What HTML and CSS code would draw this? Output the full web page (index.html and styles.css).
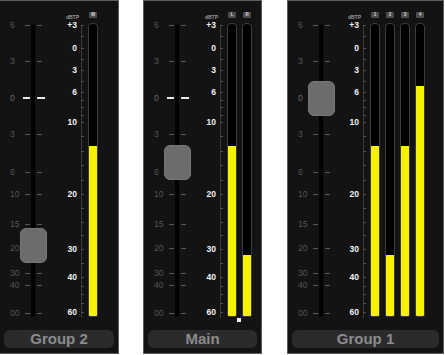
FILE: index.html
```html
<!DOCTYPE html>
<html>
<head>
<meta charset="utf-8">
<link rel="stylesheet" href="styles.css">
</head>
<body>
<div class="strips">

  <section class="strip strip--g2">
    <div class="strip__body">
      <div class="fader">
        <div class="fader__track"></div>
        <div class="mark" style="top:19px"><span class="mark__label">6</span><i class="tick"></i><i class="tick"></i></div>
        <div class="mark" style="top:55px"><span class="mark__label">3</span><i class="tick"></i><i class="tick"></i></div>
        <div class="mark mark--zero" style="top:92px"><span class="mark__label">0</span><i class="tick"></i><i class="tick"></i></div>
        <div class="mark" style="top:128px"><span class="mark__label">3</span><i class="tick"></i><i class="tick"></i></div>
        <div class="mark" style="top:166px"><span class="mark__label">6</span><i class="tick"></i><i class="tick"></i></div>
        <div class="mark" style="top:188px"><span class="mark__label">10</span><i class="tick"></i><i class="tick"></i></div>
        <div class="mark" style="top:218px"><span class="mark__label">15</span><i class="tick"></i><i class="tick"></i></div>
        <div class="mark" style="top:242px"><span class="mark__label">20</span><i class="tick"></i><i class="tick"></i></div>
        <div class="mark" style="top:267px"><span class="mark__label">30</span><i class="tick"></i><i class="tick"></i></div>
        <div class="mark" style="top:279px"><span class="mark__label">40</span><i class="tick"></i><i class="tick"></i></div>
        <div class="mark" style="top:307px"><span class="mark__label">00</span><i class="tick"></i><i class="tick"></i></div>
        <div class="fader__knob" style="top:227px"></div>
      </div>
      <div class="meters" style="--n:1">
        <span class="dbtp">dBTP</span>
        <span class="badge">M</span>
        <div class="scale">
          <i class="scale__line"></i>
          <i class="scale__tick" style="top:2px"></i><i class="scale__tick" style="top:13px"></i><i class="scale__tick" style="top:25px"></i><i class="scale__tick" style="top:36px"></i><i class="scale__tick" style="top:47px"></i><i class="scale__tick" style="top:58px"></i><i class="scale__tick" style="top:69px"></i><i class="scale__tick" style="top:77px"></i><i class="scale__tick" style="top:84px"></i><i class="scale__tick" style="top:92px"></i><i class="scale__tick" style="top:99px"></i><i class="scale__tick" style="top:113px"></i><i class="scale__tick" style="top:128px"></i><i class="scale__tick" style="top:142px"></i><i class="scale__tick" style="top:157px"></i><i class="scale__tick" style="top:171px"></i><i class="scale__tick" style="top:185px"></i><i class="scale__tick" style="top:199px"></i><i class="scale__tick" style="top:212px"></i><i class="scale__tick" style="top:226px"></i><i class="scale__tick" style="top:240px"></i><i class="scale__tick" style="top:254px"></i><i class="scale__tick" style="top:263px"></i><i class="scale__tick" style="top:271px"></i><i class="scale__tick" style="top:280px"></i><i class="scale__tick" style="top:289px"></i>
          <span class="scale__label" style="top:-3px">+3</span>
          <span class="scale__label" style="top:20px">0</span>
          <span class="scale__label" style="top:42px">3</span>
          <span class="scale__label" style="top:64px">6</span>
          <span class="scale__label" style="top:94px">10</span>
          <span class="scale__label" style="top:166px">20</span>
          <span class="scale__label" style="top:221px">30</span>
          <span class="scale__label" style="top:249px">40</span>
          <span class="scale__label" style="top:284px">60</span>
        </div>
        <div class="meter"><div class="meter__fill" style="height:170px"></div></div>
      </div>
    </div>
    <div class="name">Group 2</div>
  </section>

  <section class="strip strip--main">
    <div class="strip__body">
      <div class="fader">
        <div class="fader__track"></div>
        <div class="mark" style="top:19px"><span class="mark__label">6</span><i class="tick"></i><i class="tick"></i></div>
        <div class="mark" style="top:55px"><span class="mark__label">3</span><i class="tick"></i><i class="tick"></i></div>
        <div class="mark mark--zero" style="top:92px"><span class="mark__label">0</span><i class="tick"></i><i class="tick"></i></div>
        <div class="mark" style="top:128px"><span class="mark__label">3</span><i class="tick"></i><i class="tick"></i></div>
        <div class="mark" style="top:166px"><span class="mark__label">6</span><i class="tick"></i><i class="tick"></i></div>
        <div class="mark" style="top:188px"><span class="mark__label">10</span><i class="tick"></i><i class="tick"></i></div>
        <div class="mark" style="top:218px"><span class="mark__label">15</span><i class="tick"></i><i class="tick"></i></div>
        <div class="mark" style="top:242px"><span class="mark__label">20</span><i class="tick"></i><i class="tick"></i></div>
        <div class="mark" style="top:267px"><span class="mark__label">30</span><i class="tick"></i><i class="tick"></i></div>
        <div class="mark" style="top:279px"><span class="mark__label">40</span><i class="tick"></i><i class="tick"></i></div>
        <div class="mark" style="top:307px"><span class="mark__label">00</span><i class="tick"></i><i class="tick"></i></div>
        <div class="fader__knob" style="top:144px"></div>
      </div>
      <div class="meters" style="--n:2">
        <span class="dbtp">dBTP</span>
        <span class="badge">L</span>
        <span class="badge">R</span>
        <div class="scale">
          <i class="scale__line"></i>
          <i class="scale__tick" style="top:2px"></i><i class="scale__tick" style="top:13px"></i><i class="scale__tick" style="top:25px"></i><i class="scale__tick" style="top:36px"></i><i class="scale__tick" style="top:47px"></i><i class="scale__tick" style="top:58px"></i><i class="scale__tick" style="top:69px"></i><i class="scale__tick" style="top:77px"></i><i class="scale__tick" style="top:84px"></i><i class="scale__tick" style="top:92px"></i><i class="scale__tick" style="top:99px"></i><i class="scale__tick" style="top:113px"></i><i class="scale__tick" style="top:128px"></i><i class="scale__tick" style="top:142px"></i><i class="scale__tick" style="top:157px"></i><i class="scale__tick" style="top:171px"></i><i class="scale__tick" style="top:185px"></i><i class="scale__tick" style="top:199px"></i><i class="scale__tick" style="top:212px"></i><i class="scale__tick" style="top:226px"></i><i class="scale__tick" style="top:240px"></i><i class="scale__tick" style="top:254px"></i><i class="scale__tick" style="top:263px"></i><i class="scale__tick" style="top:271px"></i><i class="scale__tick" style="top:280px"></i><i class="scale__tick" style="top:289px"></i>
          <span class="scale__label" style="top:-3px">+3</span>
          <span class="scale__label" style="top:20px">0</span>
          <span class="scale__label" style="top:42px">3</span>
          <span class="scale__label" style="top:64px">6</span>
          <span class="scale__label" style="top:94px">10</span>
          <span class="scale__label" style="top:166px">20</span>
          <span class="scale__label" style="top:221px">30</span>
          <span class="scale__label" style="top:249px">40</span>
          <span class="scale__label" style="top:284px">60</span>
        </div>
        <div class="meter"><div class="meter__fill" style="height:170px"></div></div>
        <div class="meter"><div class="meter__fill" style="height:61px"></div></div>
        <i class="meters__dot"></i>
      </div>
    </div>
    <div class="name">Main</div>
  </section>

  <section class="strip strip--g1">
    <div class="strip__body">
      <div class="fader">
        <div class="fader__track"></div>
        <div class="mark" style="top:19px"><span class="mark__label">6</span><i class="tick"></i><i class="tick"></i></div>
        <div class="mark" style="top:55px"><span class="mark__label">3</span><i class="tick"></i><i class="tick"></i></div>
        <div class="mark mark--zero" style="top:92px"><span class="mark__label">0</span><i class="tick"></i><i class="tick"></i></div>
        <div class="mark" style="top:128px"><span class="mark__label">3</span><i class="tick"></i><i class="tick"></i></div>
        <div class="mark" style="top:166px"><span class="mark__label">6</span><i class="tick"></i><i class="tick"></i></div>
        <div class="mark" style="top:188px"><span class="mark__label">10</span><i class="tick"></i><i class="tick"></i></div>
        <div class="mark" style="top:218px"><span class="mark__label">15</span><i class="tick"></i></div>
        <div class="mark" style="top:242px"><span class="mark__label">20</span><i class="tick"></i><i class="tick"></i></div>
        <div class="mark" style="top:267px"><span class="mark__label">30</span><i class="tick"></i><i class="tick"></i></div>
        <div class="mark" style="top:279px"><span class="mark__label">40</span><i class="tick"></i><i class="tick"></i></div>
        <div class="mark" style="top:307px"><span class="mark__label">00</span><i class="tick"></i><i class="tick"></i></div>
        <div class="fader__knob" style="top:80px"></div>
      </div>
      <div class="meters" style="--n:4">
        <span class="dbtp">dBTP</span>
        <span class="badge">1</span>
        <span class="badge">2</span>
        <span class="badge">3</span>
        <span class="badge">4</span>
        <div class="scale">
          <i class="scale__line"></i>
          <i class="scale__tick" style="top:2px"></i><i class="scale__tick" style="top:13px"></i><i class="scale__tick" style="top:25px"></i><i class="scale__tick" style="top:36px"></i><i class="scale__tick" style="top:47px"></i><i class="scale__tick" style="top:58px"></i><i class="scale__tick" style="top:69px"></i><i class="scale__tick" style="top:77px"></i><i class="scale__tick" style="top:84px"></i><i class="scale__tick" style="top:92px"></i><i class="scale__tick" style="top:99px"></i><i class="scale__tick" style="top:113px"></i><i class="scale__tick" style="top:128px"></i><i class="scale__tick" style="top:142px"></i><i class="scale__tick" style="top:157px"></i><i class="scale__tick" style="top:171px"></i><i class="scale__tick" style="top:185px"></i><i class="scale__tick" style="top:199px"></i><i class="scale__tick" style="top:212px"></i><i class="scale__tick" style="top:226px"></i><i class="scale__tick" style="top:240px"></i><i class="scale__tick" style="top:254px"></i><i class="scale__tick" style="top:263px"></i><i class="scale__tick" style="top:271px"></i><i class="scale__tick" style="top:280px"></i><i class="scale__tick" style="top:289px"></i>
          <span class="scale__label" style="top:-3px">+3</span>
          <span class="scale__label" style="top:20px">0</span>
          <span class="scale__label" style="top:42px">3</span>
          <span class="scale__label" style="top:64px">6</span>
          <span class="scale__label" style="top:94px">10</span>
          <span class="scale__label" style="top:166px">20</span>
          <span class="scale__label" style="top:221px">30</span>
          <span class="scale__label" style="top:249px">40</span>
          <span class="scale__label" style="top:284px">60</span>
        </div>
        <div class="meter"><div class="meter__fill" style="height:170px"></div></div>
        <div class="meter"><div class="meter__fill" style="height:61px"></div></div>
        <div class="meter"><div class="meter__fill" style="height:170px"></div></div>
        <div class="meter"><div class="meter__fill" style="height:230px"></div></div>
      </div>
    </div>
    <div class="name">Group 1</div>
  </section>

</div>
</body>
</html>
```

FILE: styles.css
```css
* {
  box-sizing: border-box;
  margin: 0;
  padding: 0;
}

html,
body {
  background: #ffffff;
}

body {
  font-family: "Liberation Sans", Arial, sans-serif;
  overflow: hidden;
  width: 445px;
  height: 355px;
}

.strips {
  display: flex;
  align-items: flex-start;
  gap: 24px;
  margin-left: -1px;
}

.strip {
  flex: none;
  height: 354px;
  background: #131313;
  border: 1px solid #5e5e5e;
  display: flex;
  flex-direction: column;
  padding-bottom: 5px;
}

.strip--g2 {
  width: 120px;
}

.strip--main {
  width: 119px;
}

.strip--g1 {
  width: 157px;
  margin-left: 1px;
}

.strip__body {
  height: 329px;
  display: flex;
}

/* ---------- fader ---------- */

.fader {
  position: relative;
  flex: none;
  width: 58px;
  height: 100%;
}

.fader__track {
  position: absolute;
  left: 31px;
  top: 23px;
  width: 4px;
  height: 293px;
  background: #000;
  border-radius: 2px;
}

.mark {
  position: absolute;
  left: 0;
  width: 58px;
  height: 10px;
  display: flex;
  align-items: center;
  padding-left: 10px;
}

.mark__label {
  width: 15px;
  font-size: 8.5px;
  line-height: 10px;
  color: #555555;
}

.tick {
  display: block;
  width: 5px;
  height: 1px;
  background: #5a5a5a;
}

.tick + .tick {
  margin-left: 7px;
}

.mark--zero .mark__label {
  width: 13px;
  color: #6a6a6a;
}

.mark--zero .tick {
  width: 7px;
  height: 2px;
  background: #e6e6e6;
}

.mark--zero .tick + .tick {
  width: 8px;
}

.fader__knob {
  position: absolute;
  left: 20px;
  width: 27px;
  height: 35px;
  background: #6c6c6c;
  border: 1px solid #777777;
  border-radius: 6px;
}

/* ---------- meters ---------- */

.meters {
  position: relative;
  display: grid;
  grid-template-columns: 20px repeat(var(--n), 10px);
  grid-template-rows: 22px 294px;
  column-gap: 5px;
  align-content: start;
}

.strip--g2 .meters {
  margin-left: 5px;
}

.strip--g1 .meters {
  margin-left: -1px;
}

.dbtp {
  grid-row: 1;
  grid-column: 1;
  justify-self: end;
  align-self: start;
  margin-top: 13px;
  margin-right: 4px;
  font-size: 5px;
  line-height: 6px;
  font-weight: bold;
  color: #9a9a9a;
  white-space: nowrap;
}

.badge {
  grid-row: 1;
  justify-self: center;
  align-self: start;
  margin-top: 11px;
  width: 8px;
  height: 6px;
  background: #4c4c4c;
  border-radius: 1px;
  font-size: 4.5px;
  line-height: 6px;
  font-weight: bold;
  color: #d8d8d8;
  text-align: center;
}

.scale {
  grid-row: 2;
  grid-column: 1;
  position: relative;
}

.scale__line {
  position: absolute;
  left: 18px;
  top: 2px;
  bottom: -1px;
  width: 1px;
  background: #3a3a3a;
}

.scale__tick {
  position: absolute;
  left: 18px;
  width: 3px;
  height: 1px;
  background: #505050;
}

.scale__label {
  position: absolute;
  right: 6px;
  height: 10px;
  font-size: 8.5px;
  line-height: 10px;
  font-weight: bold;
  color: #f2f2f2;
  white-space: nowrap;
}

.meter {
  grid-row: 2;
  display: flex;
  flex-direction: column;
  justify-content: flex-end;
  background: #000;
  border: 1px solid #3c3c3c;
  border-radius: 4px 4px 2px 2px;
  overflow: hidden;
}

.meter__fill {
  background: #f7f200;
}

.meters__dot {
  position: absolute;
  left: 35px;
  top: 317px;
  width: 4px;
  height: 4px;
  background: #ececec;
}

/* ---------- name ---------- */

.name {
  margin: 0 4px;
  height: 18px;
  background: #2b2b2e;
  border-radius: 6px;
  font-size: 15px;
  line-height: 18px;
  font-weight: bold;
  color: #8b8b8b;
  text-align: center;
}
```
